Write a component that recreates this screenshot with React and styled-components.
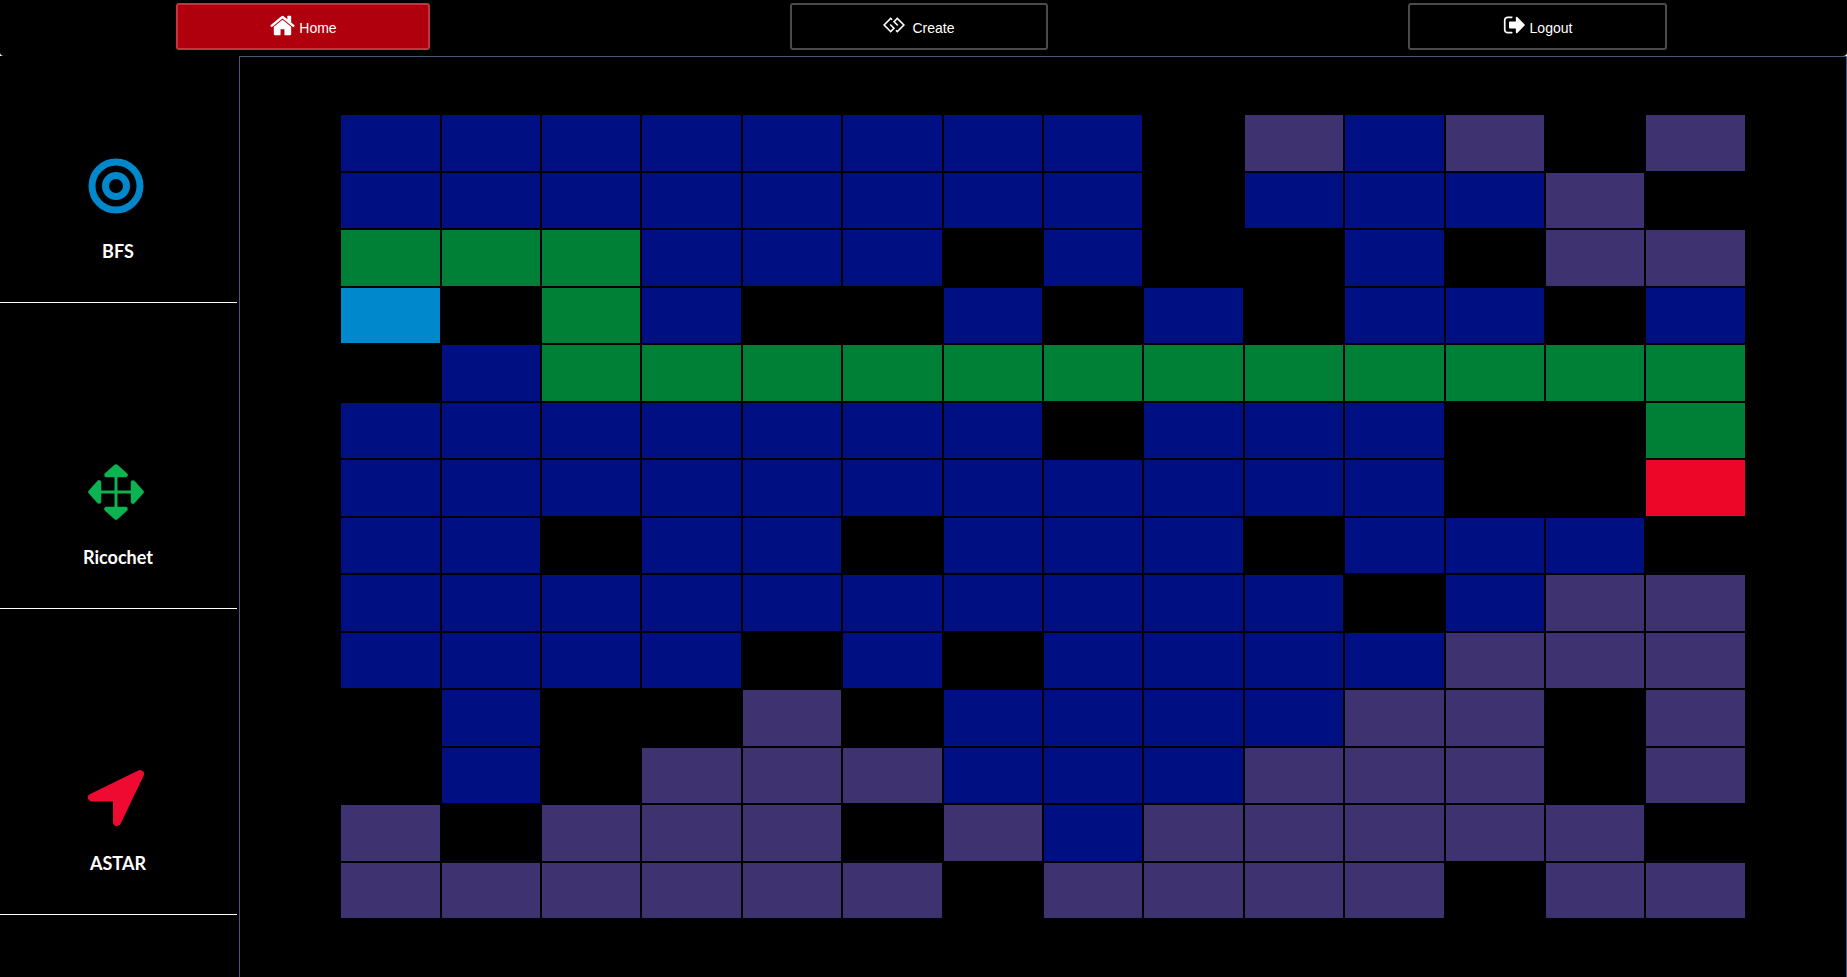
import styled, { createGlobalStyle } from "styled-components";
import { FaGg } from "react-icons/fa";

const Global = createGlobalStyle`
	html, body {
		margin: 0;
		padding: 0;
		background: #fff;
	}
	* {
		box-sizing: border-box;
	}
`;

const Page = styled.div`
	width: 1847px;
	height: 977px;
	overflow: hidden;
	display: flex;
	flex-direction: column;
`;

const Header = styled.header`
	height: 56px;
	flex: none;
	background: #000;
	border-radius: 0 0 4px 4px;
	display: flex;
	gap: 360px;
	padding: 3px 0 0 176px;
`;

const NavButton = styled.button`
	width: ${(p) => (p.$active ? "254px" : "258px")};
	height: 47px;
	border-radius: 3px;
	border: 2px solid ${(p) => (p.$active ? "#c5343f" : "#4b4b4b")};
	background: ${(p) => (p.$active ? "#b0000e" : "#000")};
	color: #fff;
	font: 14px "Liberation Sans", Arial, sans-serif;
	display: flex;
	align-items: center;
	justify-content: center;
	gap: 3px;
	padding: 0;
	&:last-child {
		width: 259px;
	}
	> span {
		position: relative;
		top: 1px;
	}
`;

const NavIcon = styled.svg`
	width: ${(p) => p.$size}px;
	height: ${(p) => p.$size}px;
	fill: #fff;
	flex: none;
	margin-top: -3px;
`;

const GgIcon = styled(FaGg)`
	width: 22px;
	height: 22px;
	color: #fff;
	flex: none;
	margin: -3px 4px 0 0;
`;

const Main = styled.div`
	flex: 1;
	display: flex;
	background: #000;
`;

const Sidebar = styled.aside`
	width: 239px;
	flex: none;
	display: flex;
	flex-direction: column;
	gap: 161px;
	padding: 102px 2px 0 0;
`;

const Algo = styled.div`
	height: 145px;
	border-bottom: 1px solid #fff;
	display: flex;
	flex-direction: column;
	align-items: center;
	color: #fff;
	> svg {
		width: 56px;
		height: 56px;
		margin-right: 5px;
	}
	> span {
		margin-top: 27px;
		padding-right: 1px;
		font: 700 18px Lato, sans-serif;
		line-height: 20px;
	}
`;

const Panel = styled.main`
	flex: 1;
	border: 1px solid #48557c;
	border-width: 1px 1px 0 1px;
	padding: 58px 0 0 101.3px;
`;

const Board = styled.div`
	width: 1403.5px;
	display: grid;
	grid-template-columns: repeat(14, 1fr);
	grid-auto-rows: 55.5px;
	gap: 2px;
`;

const colors = {
	b: "#000f82",
	p: "#3f3270",
	g: "#008037",
	s: "#0088cc",
	r: "#ee0628",
	".": "#000",
};

const Cell = styled.div`
	background: ${(p) => colors[p.$kind]};
`;

const rows = [
	"bbbbbbbb.pbp.p",
	"bbbbbbbb.bbbp.",
	"gggbbb.b..b.pp",
	"s.gb..b.b.bb.b",
	".bgggggggggggg",
	"bbbbbbb.bbb..g",
	"bbbbbbbbbbb..r",
	"bb.bb.bbb.bbb.",
	"bbbbbbbbbb.bpp",
	"bbbb.b.bbbbppp",
	".b..p.bbbbpp.p",
	".b.pppbbbppp.p",
	"p.ppp.pbppppp.",
	"pppppp.pppp.pp",
];

const App = () => {
	return (
		<Page>
			<Global />
			<Header>
				<NavButton $active>
					<NavIcon $size={27} viewBox="0 0 1792 1792">
						<path d="M1472 992v480q0 26-19 45t-45 19h-384v-384h-256v384h-384q-26 0-45-19t-19-45v-480q0-1 .5-3t.5-3l575-474 575 474q1 2 1 6zm223-69l-62 74q-8 9-21 11h-3q-13 0-21-7l-692-577-692 577q-12 8-24 7-13-2-21-11l-62-74q-8-10-7-23.5t11-21.5l719-599q32-26 76-26t76 26l244 204v-195q0-14 9-23t23-9h192q14 0 23 9t9 23v408l219 182q10 8 11 21.5t-7 23.5z" />
					</NavIcon>
					<span>Home</span>
				</NavButton>
				<NavButton>
					<GgIcon />
					<span>Create</span>
				</NavButton>
				<NavButton>
					<NavIcon $size={24} viewBox="0 0 1792 1792">
						<path d="M704 1440q0 4 1 20t.5 26.5-3 23.5-10 19.500-20.500 6.500h-320q-119 0-203.500-84.500t-84.500-203.500v-704q0-119 84.500-203.500t203.500-84.500h320q13 0 22.500 9.500t9.500 22.500q0 4 1 20t.5 26.500-3 23.500-10 19.500-20.500 6.500h-320q-66 0-113 47t-47 113v704q0 66 47 113t113 47h312l11.500 1 11.500 3 8 5.500 7 9 2 13.500zm928-544q0 26-19 45l-544 544q-19 19-45 19t-45-19-19-45v-288h-448q-26 0-45-19t-19-45v-384q0-26 19-45t45-19h448v-288q0-26 19-45t45-19 45 19l544 544q19 19 19 45z" />
					</NavIcon>
					<span>Logout</span>
				</NavButton>
			</Header>
			<Main>
				<Sidebar>
					<Algo>
						<svg viewBox="0 0 56 56" fill="none" stroke="#0088cc" strokeWidth="7">
							<circle cx="28" cy="28" r="24" />
							<circle cx="28" cy="28" r="10.5" />
						</svg>
						<span>BFS</span>
					</Algo>
					<Algo>
						<svg viewBox="0 0 56 56" fill="#0bb450" stroke="#0bb450">
							<path d="M28 8v40M8 28h40" strokeWidth="3" />
							<path d="M28 2.500 37.500 11H18.500zM28 53.500 18.500 45H37.500zM2.500 28 11 18.500V37.500zM53.500 28 45 37.500V18.500z" strokeWidth="4.500" strokeLinejoin="round" />
						</svg>
						<span>Ricochet</span>
					</Algo>
					<Algo>
						<svg viewBox="0 0 56 56" fill="#ee0a30" stroke="#ee0a30" strokeWidth="8" strokeLinejoin="round">
							<path d="M52 4 4 27.500H29V52z" />
						</svg>
						<span>ASTAR</span>
					</Algo>
				</Sidebar>
				<Panel>
					<Board>
						{rows.flatMap((row, y) =>
							row.split("").map((kind, x) => <Cell key={y + "-" + x} $kind={kind} />)
						)}
					</Board>
				</Panel>
			</Main>
		</Page>
	);
};

export default App;
